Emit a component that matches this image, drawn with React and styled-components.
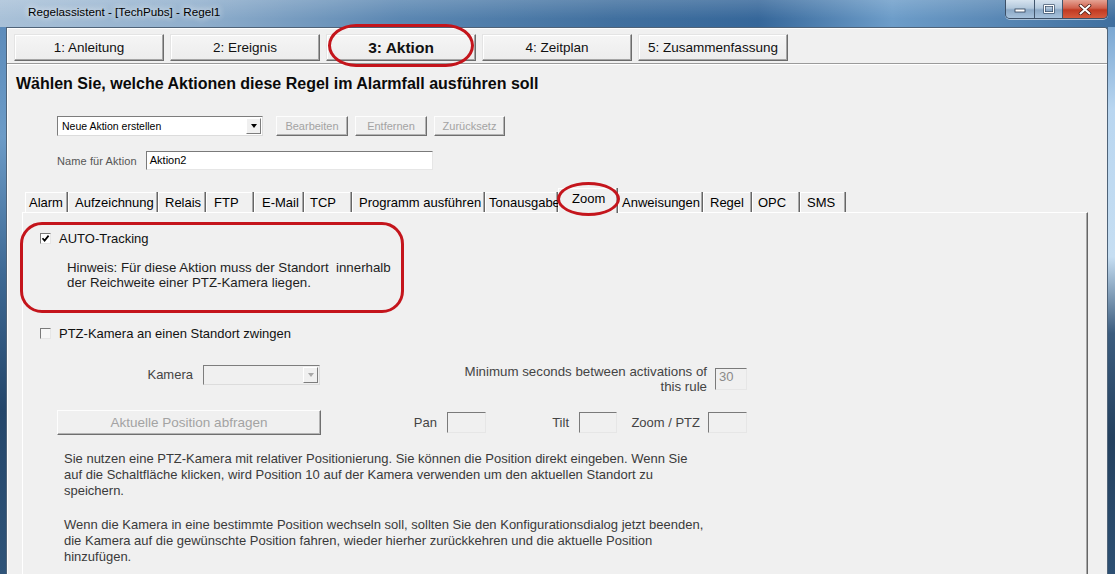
import React from 'react';
import styled, { createGlobalStyle } from 'styled-components';

const GlobalStyle = createGlobalStyle`
  html, body {
    margin: 0;
    padding: 0;
    overflow: hidden;
  }
  body {
    font-family: "Liberation Sans", Arial, sans-serif;
    background: #3b6a98;
  }
`;

const Window = styled.div`
  width: 1115px;
  height: 574px;
  overflow: hidden;
  display: flex;
  flex-direction: column;
`;

const TitleBar = styled.div`
  height: 27px;
  flex: none;
  display: flex;
  align-items: flex-start;
  background:
    linear-gradient(180deg, rgba(255, 255, 255, 0.16), rgba(255, 255, 255, 0) 70%),
    linear-gradient(90deg, #a9c1d8 0%, #8faecc 18%, #5b87b2 36%, #41709f 55%, #36679a 68%, #6d9dc9 80%, #5c8bb8 88%, #3f6f9f 100%);
`;

const Title = styled.div`
  margin: 5px 0 0 28px;
  font-size: 11.7px;
  line-height: 14px;
  color: #000;
  text-shadow: 0 0 6px rgba(255, 255, 255, 0.9), 0 0 10px rgba(255, 255, 255, 0.6);
`;

const CaptionGroup = styled.div`
  margin-left: auto;
  margin-right: 7px;
  display: flex;
  height: 18px;
  border: 1px solid #3c4f66;
  border-top: none;
  border-radius: 0 0 5px 5px;
  overflow: hidden;
  box-shadow: 0 1px 0 rgba(255, 255, 255, 0.5);
`;

const CaptionButton = styled.div`
  width: ${p => p.$w}px;
  display: flex;
  align-items: center;
  justify-content: center;
  border-left: ${p => (p.$first ? 'none' : '1px solid #42566d')};
  background: ${p =>
    p.$close
      ? 'linear-gradient(180deg, #e5a394 0%, #d0614d 45%, #c13a22 55%, #d55a3c 100%)'
      : 'linear-gradient(180deg, #d6e3ef 0%, #b3c8dc 45%, #8ca9c6 55%, #a7c2dc 100%)'};
`;

const Frame = styled.div`
  flex: 1;
  min-height: 0;
  display: flex;
`;

const LeftEdge = styled.div`
  width: 6px;
  flex: none;
  background: linear-gradient(180deg, #5d8cbb 0%, #6c9bc7 20%, #3e6994 45%, #24466a 70%, #2f5479 100%);
`;

const RightEdge = styled.div`
  width: 7px;
  flex: none;
  background: linear-gradient(180deg, #7aa7d2 0%, #b9d6f0 15%, #c6def2 42%, #3b5c7e 56%, #24415f 75%, #2d5073 100%);
`;

const Client = styled.div`
  flex: 1;
  min-width: 0;
  display: flex;
  flex-direction: column;
  background: #f0f0f0;
  border: 1px solid #4f6378;
  border-bottom: none;
  border-top-right-radius: 3px;
  box-shadow: inset 1px 1px #fdfdfd;
`;

const WizardBar = styled.div`
  display: flex;
  gap: 6px;
  padding: 6px 0 2px 7px;
  border-bottom: 1px solid #9a9a9a;
  box-shadow: 0 1px 0 #fff;
`;

const WizardButton = styled.div`
  position: relative;
  width: 150px;
  height: 27px;
  box-sizing: border-box;
  display: flex;
  align-items: center;
  justify-content: center;
  background: linear-gradient(180deg, #f5f5f5, #ececec);
  border: 1px solid;
  border-color: #e4e4e4 #6c6c6c #6c6c6c #e4e4e4;
  box-shadow: inset -1px -1px #a5a5a5, inset 1px 1px #fff;
  font-size: ${p => (p.$active ? '15.5px' : '13.5px')};
  font-weight: ${p => (p.$active ? 700 : 400)};
  color: #111;
`;

const Ring = styled.span`
  position: absolute;
  pointer-events: none;
  z-index: 2;
  top: ${p => p.$t}px;
  right: ${p => p.$r}px;
  bottom: ${p => p.$b}px;
  left: ${p => p.$l}px;
  border: 3px solid #c4151c;
  border-radius: ${p => p.$radius};
`;

const Heading = styled.h1`
  margin: 11px 0 0 9px;
  font-size: 16px;
  line-height: 18px;
  font-weight: 700;
  color: #0a0a0a;
`;

const ActionRow = styled.div`
  display: flex;
  align-items: center;
  height: 20px;
  margin: 23px 0 0 50px;
`;

const Combo = styled.div`
  width: ${p => p.$w}px;
  height: 20px;
  box-sizing: border-box;
  display: flex;
  background: ${p => (p.$disabled ? '#f0f0f0' : '#fff')};
  border: 1px solid;
  border-color: #7d7d7d #dcdcdc #dcdcdc #7d7d7d;
  margin-left: ${p => p.$ml || 0}px;
  margin-top: ${p => p.$mt || 0}px;
`;

const ComboText = styled.div`
  flex: 1;
  padding-left: 4px;
  font-size: 10.5px;
  line-height: 18px;
  color: #000;
`;

const ComboArrow = styled.div`
  width: 15px;
  margin: 1px;
  box-sizing: border-box;
  display: flex;
  align-items: center;
  justify-content: center;
  background: #f0f0f0;
  border: 1px solid;
  border-color: #fff #7d7d7d #7d7d7d #fff;
  &::after {
    content: '';
    border-left: 3.5px solid transparent;
    border-right: 3.5px solid transparent;
    border-top: 4px solid ${p => (p.$disabled ? '#a8a8a8' : '#000')};
  }
`;

const ButtonGroup = styled.div`
  display: flex;
  gap: 7px;
  margin-left: 13px;
`;

const RaisedButton = styled.div`
  width: ${p => p.$w}px;
  height: ${p => p.$h}px;
  box-sizing: border-box;
  display: flex;
  align-items: center;
  justify-content: center;
  background: #f0f0f0;
  border: 1px solid;
  border-color: #fdfdfd #6f6f6f #6f6f6f #fdfdfd;
  box-shadow: inset -1px -1px #b4b4b4;
  font-size: ${p => p.$fs}px;
  color: #a3a3a3;
  white-space: nowrap;
`;

const NameRow = styled.div`
  display: flex;
  align-items: center;
  gap: 9px;
  margin: 15px 0 0 50px;
  height: 19px;
`;

const SmallLabel = styled.span`
  font-size: 11px;
  color: #555;
  letter-spacing: 0.1px;
`;

const TextBox = styled.div`
  width: ${p => p.$w}px;
  height: ${p => p.$h}px;
  box-sizing: border-box;
  padding: 0 3px;
  background: ${p => (p.$disabled ? '#f0f0f0' : '#fff')};
  border: 1px solid;
  border-color: #7a7a7a #e6e6e6 #e6e6e6 #7a7a7a;
  font-size: ${p => p.$fs || 11}px;
  line-height: ${p => p.$lh || p.$h - 2}px;
  color: ${p => (p.$disabled ? '#8a8a8a' : '#000')};
  margin-left: ${p => p.$ml || 0}px;
  margin-top: ${p => p.$mt || 0}px;
`;

const TabArea = styled.div`
  flex: 1;
  display: flex;
  flex-direction: column;
  margin: 20px 19px 0 15px;
`;

const TabStrip = styled.div`
  display: flex;
  align-items: flex-end;
  height: 22px;
  padding-left: 3px;
`;

const Tab = styled.div`
  position: relative;
  width: ${p => p.$w}px;
  height: ${p => (p.$active ? 25 : 20)}px;
  margin-bottom: ${p => (p.$active ? -1 : 0)}px;
  z-index: ${p => (p.$active ? 1 : 0)};
  box-sizing: border-box;
  display: flex;
  align-items: center;
  padding: 0 0 ${p => (p.$active ? 4 : 0)}px ${p => p.$pad}px;
  background: #f0f0f0;
  border-right: 1px solid #666;
  box-shadow: inset -1px 0 #a8a8a8, inset 1px 1px #fff;
  font-size: 13px;
  color: #000;
  white-space: nowrap;
`;

const Panel = styled.div`
  flex: 1;
  border-top: 1px solid #fff;
  border-left: 1px solid #fff;
  border-right: 1px solid #666;
  box-shadow: inset -1px 0 #a8a8a8;
`;

const NoteBox = styled.div`
  width: 384px;
  height: 91px;
  box-sizing: border-box;
  margin: 9px 0 0 -3px;
  padding: 6px 0 0 17px;
  border: 3px solid #c4151c;
  border-radius: 22px;
`;

const CheckRow = styled.div`
  display: flex;
  align-items: center;
  gap: 8px;
  height: 15px;
  margin-top: ${p => p.$mt || 0}px;
  margin-left: ${p => p.$ml || 0}px;
  font-size: 13px;
  color: #111;
`;

const CheckBox = styled.span`
  width: 11px;
  height: 11px;
  box-sizing: border-box;
  display: inline-flex;
  align-items: center;
  justify-content: center;
  background: ${p => (p.$checked ? '#fff' : '#f7f7f7')};
  border: 1px solid;
  border-color: #7a7a7a #e6e6e6 #e6e6e6 #7a7a7a;
`;

const Hint = styled.div`
  margin: 14px 0 0 27px;
  font-size: 13.3px;
  line-height: 15px;
  color: #1e1e1e;
  white-space: pre;
`;

const CameraRow = styled.div`
  display: flex;
  align-items: flex-start;
  height: 30px;
  margin-top: 23px;
`;

const PositionRow = styled.div`
  display: flex;
  align-items: center;
  height: 25px;
  margin-top: 16px;
  padding-left: 34px;
`;

const FieldLabel = styled.div`
  width: ${p => p.$w}px;
  flex: none;
  text-align: right;
  font-size: ${p => p.$fs || 13}px;
  line-height: ${p => p.$lh || 20}px;
  margin-top: ${p => p.$mt || 0}px;
  color: #444;
`;

const Paragraph = styled.p`
  margin: ${p => p.$mt}px 0 0 41px;
  font-size: 13px;
  line-height: 16px;
  color: #3a3a3a;
`;

const tabs = [
  ['Alarm', 43, 4],
  ['Aufzeichnung', 90, 7],
  ['Relais', 48, 7],
  ['FTP', 48, 8],
  ['E-Mail', 50, 8],
  ['TCP', 48, 6],
  ['Programm ausführen', 133, 7],
  ['Tonausgabe', 73, 4],
  ['Zoom', 60, 14, true],
  ['Anweisungen', 85, 4],
  ['Regel', 49, 7],
  ['OPC', 48, 6],
  ['SMS', 46, 7],
];

const steps = ['1: Anleitung', '2: Ereignis', '3: Aktion', '4: Zeitplan', '5: Zusammenfassung'];

const CheckMark = () => (
  <svg width="9" height="9" viewBox="0 0 9 9">
    <path d="M1.5 4.2 L3.6 6.6 L7.6 1.6" fill="none" stroke="#000" strokeWidth="1.7" />
  </svg>
);

const CaptionIcon = ({ kind }) => {
  if (kind === 'min') {
    return (
      <svg width="12" height="8" viewBox="0 0 12 8">
        <rect x="1" y="4" width="10" height="3" fill="#fff" stroke="#2c3e55" strokeWidth="0.8" />
      </svg>
    );
  }
  if (kind === 'max') {
    return (
      <svg width="12" height="10" viewBox="0 0 12 10">
        <rect x="1.5" y="1.5" width="9" height="7" fill="none" stroke="#2c3e55" strokeWidth="2.2" />
        <rect x="1.5" y="1.5" width="9" height="7" fill="none" stroke="#fff" strokeWidth="1" />
      </svg>
    );
  }
  return (
    <svg width="14" height="11" viewBox="0 0 14 11">
      <path d="M2.5 1.5 L11.5 9.5 M11.5 1.5 L2.5 9.5" stroke="#4a1a12" strokeWidth="3.6" strokeLinecap="round" />
      <path d="M2.5 1.5 L11.5 9.5 M11.5 1.5 L2.5 9.5" stroke="#fff" strokeWidth="2" strokeLinecap="round" />
    </svg>
  );
};

export default function App() {
  return (
    <>
      <GlobalStyle />
      <Window>
        <TitleBar>
          <Title>Regelassistent - [TechPubs] - Regel1</Title>
          <CaptionGroup>
            <CaptionButton $w={28} $first>
              <CaptionIcon kind="min" />
            </CaptionButton>
            <CaptionButton $w={27}>
              <CaptionIcon kind="max" />
            </CaptionButton>
            <CaptionButton $w={44} $close>
              <CaptionIcon kind="close" />
            </CaptionButton>
          </CaptionGroup>
        </TitleBar>
        <Frame>
          <LeftEdge />
          <Client>
            <WizardBar>
              {steps.map((step, i) => (
                <WizardButton key={step} $active={i === 2}>
                  {step}
                  {i === 2 && <Ring $t={-11} $r={1} $b={-7} $l={1} $radius="30px / 23px" />}
                </WizardButton>
              ))}
            </WizardBar>

            <Heading>Wählen Sie, welche Aktionen diese Regel im Alarmfall ausführen soll</Heading>

            <ActionRow>
              <Combo $w={206}>
                <ComboText>Neue Aktion erstellen</ComboText>
                <ComboArrow />
              </Combo>
              <ButtonGroup>
                <RaisedButton $w={72} $h={20} $fs={11}>Bearbeiten</RaisedButton>
                <RaisedButton $w={72} $h={20} $fs={11}>Entfernen</RaisedButton>
                <RaisedButton $w={71} $h={20} $fs={11}>Zurücksetz</RaisedButton>
              </ButtonGroup>
            </ActionRow>

            <NameRow>
              <SmallLabel>Name für Aktion</SmallLabel>
              <TextBox $w={287} $h={19}>Aktion2</TextBox>
            </NameRow>

            <TabArea>
              <TabStrip>
                {tabs.map(([label, w, pad, active]) => (
                  <Tab key={label} $w={w} $pad={pad} $active={active}>
                    {label}
                    {active && <Ring $t={-6} $r={-3} $b={-3} $l={-1} $radius="50%" />}
                  </Tab>
                ))}
              </TabStrip>
              <Panel>
                <NoteBox>
                  <CheckRow>
                    <CheckBox $checked>
                      <CheckMark />
                    </CheckBox>
                    AUTO-Tracking
                  </CheckRow>
                  <Hint>
                    {'Hinweis: Für diese Aktion muss der Standort  innerhalb\nder Reichweite einer PTZ-Kamera liegen.'}
                  </Hint>
                </NoteBox>

                <CheckRow $mt={13} $ml={17}>
                  <CheckBox />
                  PTZ-Kamera an einen Standort zwingen
                </CheckRow>

                <CameraRow>
                  <FieldLabel $w={170} $mt={1}>Kamera</FieldLabel>
                  <Combo $w={117} $ml={10} $mt={1} $disabled>
                    <ComboText />
                    <ComboArrow $disabled />
                  </Combo>
                  <FieldLabel $w={387} $lh={15} $fs={13.3}>
                    Minimum seconds between activations of
                    <br />
                    this rule
                  </FieldLabel>
                  <TextBox $w={32} $h={22} $ml={8} $mt={4} $fs={13} $lh={16} $disabled>30</TextBox>
                </CameraRow>

                <PositionRow>
                  <RaisedButton $w={264} $h={25} $fs={13.5}>Aktuelle Position abfragen</RaisedButton>
                  <FieldLabel $w={116}>Pan</FieldLabel>
                  <TextBox $w={39} $h={21} $ml={10} $disabled />
                  <FieldLabel $w={83}>Tilt</FieldLabel>
                  <TextBox $w={38} $h={21} $ml={10} $disabled />
                  <FieldLabel $w={83}>Zoom / PTZ</FieldLabel>
                  <TextBox $w={39} $h={21} $ml={8} $disabled />
                </PositionRow>

                <Paragraph $mt={16}>
                  Sie nutzen eine PTZ-Kamera mit relativer Positionierung. Sie können die Position direkt eingeben. Wenn Sie
                  <br />
                  auf die Schaltfläche klicken, wird Position 10 auf der Kamera verwenden um den aktuellen Standort zu
                  <br />
                  speichern.
                </Paragraph>
                <Paragraph $mt={18}>
                  Wenn die Kamera in eine bestimmte Position wechseln soll, sollten Sie den Konfigurationsdialog jetzt beenden,
                  <br />
                  die Kamera auf die gewünschte Position fahren, wieder hierher zurückkehren und die aktuelle Position
                  <br />
                  hinzufügen.
                </Paragraph>
              </Panel>
            </TabArea>
          </Client>
          <RightEdge />
        </Frame>
      </Window>
    </>
  );
}
